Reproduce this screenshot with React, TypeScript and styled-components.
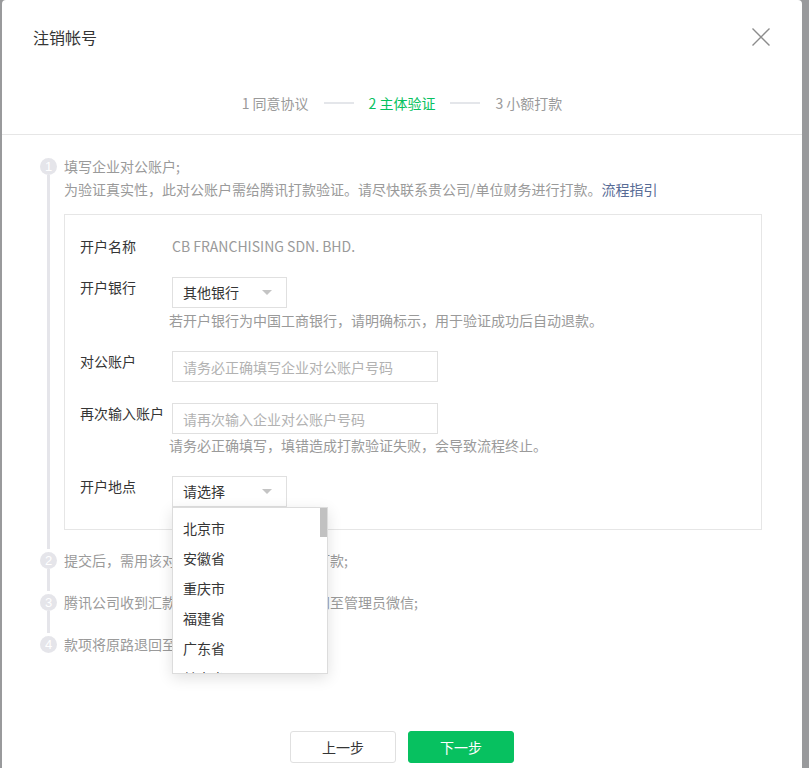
import styled, { createGlobalStyle } from 'styled-components';

const GlobalStyle = createGlobalStyle`
  html, body {
    margin: 0;
    padding: 0;
    overflow: hidden;
    background: #999a9c;
  }
  body {
    font-family: "Noto Sans CJK SC", "Microsoft YaHei", "Liberation Sans", sans-serif;
    font-size: 14px;
    color: #353535;
  }
  * { box-sizing: border-box; }
`;

const Page = styled.div`
  display: flex;
  padding-left: 2px;
  min-height: 768px;
`;

const Modal = styled.div`
  width: 800px;
  background: #fff;
  border-radius: 4px 4px 0 0;
`;

const Header = styled.div`
  display: flex;
  align-items: center;
  justify-content: space-between;
  padding: 27px 32px 0 31px;

  h3 {
    margin: 0;
    font-size: 16px;
    font-weight: normal;
    line-height: 20px;
    color: #353535;
  }
`;

const CloseBtn = styled.button`
  width: 18px;
  height: 18px;
  padding: 0;
  border: none;
  background: none;
  cursor: pointer;

  svg { display: block; }
`;

const StepNav = styled.div`
  display: flex;
  align-items: center;
  justify-content: center;
  gap: 15px;
  margin-top: 46px;
  padding-bottom: 21px;
  border-bottom: 1px solid #e6e6e6;
  line-height: 20px;
`;

const NavItem = styled.span<{ $active?: boolean }>`
  color: ${(p) => (p.$active ? '#07c160' : '#9a9a9a')};
`;

const NavLine = styled.i`
  display: block;
  width: 30px;
  height: 2px;
  background: #e4e6ea;
`;

const Body = styled.div`
  padding: 20px 40px 0 38px;
`;

const Step = styled.div`
  display: flex;
  gap: 7px;
`;

const Rail = styled.div`
  display: flex;
  flex-direction: column;
  align-items: center;
  width: 17px;
`;

const Dot = styled.span`
  display: flex;
  align-items: center;
  justify-content: center;
  width: 17px;
  height: 17px;
  margin-top: 3px;
  border-radius: 50%;
  background: #e5e5ea;
  color: #fff;
  font-size: 13px;
  line-height: 1;
  font-family: "Liberation Sans", sans-serif;
`;

const RailLine = styled.span`
  flex: 1;
  width: 3px;
  background: #e5e5ea;
`;

const StepContent = styled.div<{ $last?: boolean }>`
  flex: 1;
  padding-bottom: ${(p) => (p.$last ? '0' : '19px')};
  color: #9a9a9a;
  line-height: 23px;

  a {
    color: #576b95;
    text-decoration: none;
  }
`;

const FormBox = styled.div`
  margin-top: 13px;
  padding: 21px 15px 22px 15px;
  border: 1px solid #e6e6e6;
`;

const FormRow = styled.div`
  display: flex;
  align-items: flex-start;
  margin-bottom: 21px;

  &:last-child { margin-bottom: 0; }
`;

const Label = styled.label`
  width: 92px;
  flex-shrink: 0;
  line-height: 20px;
  color: #353535;
  white-space: nowrap;
`;

const Field = styled.div`
  position: relative;
  display: flex;
  flex-direction: column;
`;

const Value = styled.span`
  line-height: 20px;
  color: #9a9a9a;
`;

const Hint = styled.p<{ $gap: number }>`
  margin: ${(p) => p.$gap}px 0 0 -3px;
  line-height: 20px;
  color: #9a9a9a;
  white-space: nowrap;
`;

const SelectBox = styled.div`
  position: relative;
  display: flex;
  align-items: center;
  justify-content: space-between;
  width: 115px;
  height: 31px;
  padding: 0 14px 0 10px;
  border: 1px solid #e0e0e0;
  color: #353535;
  background: #fff;

  &::after {
    content: '';
    width: 0;
    height: 0;
    border-left: 5px solid transparent;
    border-right: 5px solid transparent;
    border-top: 5px solid #c4c4c4;
  }
`;

const TextInput = styled.input`
  width: 266px;
  height: 31px;
  padding: 0 10px;
  border: 1px solid #e0e0e0;
  font: inherit;
  color: #353535;
  outline: none;

  &::placeholder { color: #b2b2b2; }
`;

const Dropdown = styled.ul`
  position: absolute;
  top: 31px;
  left: 0;
  z-index: 10;
  width: 156px;
  height: 167px;
  margin: 0;
  padding: 5px 0 0;
  list-style: none;
  overflow: hidden;
  background: #fff;
  border: 1px solid #dcdcdc;
  box-shadow: 0 4px 14px rgba(0, 0, 0, 0.12);

  li {
    height: 30px;
    padding-left: 10px;
    line-height: 30px;
    color: #353535;
  }
`;

const ScrollThumb = styled.span`
  position: absolute;
  top: 0;
  right: 0;
  width: 7px;
  height: 29px;
  background: #c1c1c1;
`;

const Footer = styled.div`
  display: flex;
  justify-content: center;
  gap: 12px;
  padding: 75px 0 20px;
`;

const Button = styled.button<{ $primary?: boolean }>`
  width: 106px;
  height: 32px;
  border-radius: 3px;
  border: 1px solid ${(p) => (p.$primary ? '#07c160' : '#e0e0e0')};
  background: ${(p) => (p.$primary ? '#07c160' : '#fff')};
  color: ${(p) => (p.$primary ? '#fff' : '#353535')};
  font: inherit;
  cursor: pointer;
`;

const provinces = ['北京市', '安徽省', '重庆市', '福建省', '广东省', '甘肃省', '广西壮族自治区'];

const App = () => {
  return (
    <>
      <GlobalStyle />
      <Page>
        <Modal>
          <Header>
            <h3>注销帐号</h3>
            <CloseBtn type="button" aria-label="关闭">
              <svg width="18" height="18" viewBox="0 0 18 18">
                <path d="M0.5 0.5 L17.5 17.5 M17.5 0.5 L0.5 17.5" stroke="#8c8c8c" strokeWidth="1.4" fill="none" />
              </svg>
            </CloseBtn>
          </Header>

          <StepNav>
            <NavItem>1 同意协议</NavItem>
            <NavLine />
            <NavItem $active>2 主体验证</NavItem>
            <NavLine />
            <NavItem>3 小额打款</NavItem>
          </StepNav>

          <Body>
            <Step>
              <Rail>
                <Dot>1</Dot>
                <RailLine />
              </Rail>
              <StepContent>
                <div>填写企业对公账户;</div>
                <div>
                  为验证真实性，此对公账户需给腾讯打款验证。请尽快联系贵公司/单位财务进行打款。<a href="#">流程指引</a>
                </div>
                <FormBox>
                  <FormRow>
                    <Label>开户名称</Label>
                    <Value>CB FRANCHISING SDN. BHD.</Value>
                  </FormRow>
                  <FormRow>
                    <Label>开户银行</Label>
                    <Field>
                      <SelectBox>其他银行</SelectBox>
                      <Hint $gap={2}>若开户银行为中国工商银行，请明确标示，用于验证成功后自动退款。</Hint>
                    </Field>
                  </FormRow>
                  <FormRow>
                    <Label>对公账户</Label>
                    <Field>
                      <TextInput placeholder="请务必正确填写企业对公账户号码" />
                    </Field>
                  </FormRow>
                  <FormRow>
                    <Label>再次输入账户</Label>
                    <Field>
                      <TextInput placeholder="请再次输入企业对公账户号码" />
                      <Hint $gap={1}>请务必正确填写，填错造成打款验证失败，会导致流程终止。</Hint>
                    </Field>
                  </FormRow>
                  <FormRow>
                    <Label>开户地点</Label>
                    <Field>
                      <SelectBox>请选择</SelectBox>
                      <Dropdown>
                        {provinces.map((name) => (
                          <li key={name}>{name}</li>
                        ))}
                        <ScrollThumb />
                      </Dropdown>
                    </Field>
                  </FormRow>
                </FormBox>
              </StepContent>
            </Step>

            <Step>
              <Rail>
                <Dot>2</Dot>
                <RailLine />
              </Rail>
              <StepContent>提交后，需用该对公账户向腾讯公司账户打款;</StepContent>
            </Step>

            <Step>
              <Rail>
                <Dot>3</Dot>
                <RailLine />
              </Rail>
              <StepContent>腾讯公司收到汇款后，会发送验证结果通知至管理员微信;</StepContent>
            </Step>

            <Step>
              <Rail>
                <Dot>4</Dot>
              </Rail>
              <StepContent $last>款项将原路退回至对公账户。</StepContent>
            </Step>
          </Body>

          <Footer>
            <Button type="button">上一步</Button>
            <Button type="button" $primary>下一步</Button>
          </Footer>
        </Modal>
      </Page>
    </>
  );
};

export default App;
